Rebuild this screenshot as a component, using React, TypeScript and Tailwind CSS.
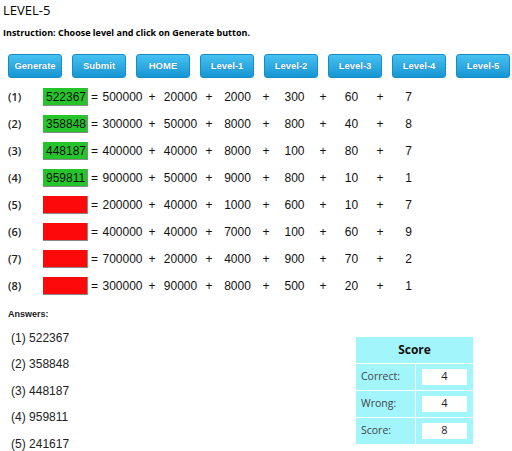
import React from 'react'

const rows = [
  { n: 1, ans: '522367', parts: ['500000', '20000', '2000', '300', '60', '7'] },
  { n: 2, ans: '358848', parts: ['300000', '50000', '8000', '800', '40', '8'] },
  { n: 3, ans: '448187', parts: ['400000', '40000', '8000', '100', '80', '7'] },
  { n: 4, ans: '959811', parts: ['900000', '50000', '9000', '800', '10', '1'] },
  { n: 5, ans: '', parts: ['200000', '40000', '1000', '600', '10', '7'] },
  { n: 6, ans: '', parts: ['400000', '40000', '7000', '100', '60', '9'] },
  { n: 7, ans: '', parts: ['700000', '20000', '4000', '900', '70', '2'] },
  { n: 8, ans: '', parts: ['300000', '90000', '8000', '500', '20', '1'] },
]

const buttons = ['Generate', 'Submit', 'HOME', 'Level-1', 'Level-2', 'Level-3', 'Level-4', 'Level-5']

const answers = ['522367', '358848', '448187', '959811', '241617']

const scores = [
  { label: 'Correct:', value: '4' },
  { label: 'Wrong:', value: '4' },
  { label: 'Score:', value: '8' },
]

export default function App() {
  return (
    <div className="w-[512px] h-[451px] overflow-hidden bg-white text-black">
      <h1 className="pl-[3px] pt-[1px] text-[13px] leading-[18px] text-black font-['Open_Sans',sans-serif]">LEVEL-5</h1>
      <p className="mt-[7.5px] pl-[3px] text-[9px] leading-[12px] font-bold text-black font-['Open_Sans',sans-serif]">
        Instruction: Choose level and click on Generate button.
      </p>

      {/* Buttons */}
      <div className="mt-[15.5px] flex gap-[10px] pl-[8px]">
        {buttons.map((b) => (
          <button
            key={b}
            className="w-[54px] h-[24px] rounded-[3px] border border-[#1a8cc4] bg-gradient-to-b from-[#45c1f2] to-[#1596d3] text-white text-[9.5px] font-bold font-['Liberation_Sans',Arial,sans-serif] [text-shadow:0_0_1px_rgba(0,60,100,0.5)]"
          >
            {b}
          </button>
        ))}
      </div>

      {/* Problems */}
      <div className="mt-[5.5px]">
        {rows.map((r) => (
          <div key={r.n} className="flex items-center h-[27px] pl-[8px] text-[12px] font-['Liberation_Sans',Arial,sans-serif] text-[#111]">
            <div className="w-[35px] text-[11px] font-semibold font-['Open_Sans',sans-serif] text-[#222]">({r.n})</div>
            <div
              className={`w-[45px] h-[18px] leading-[18px] pl-[3px] border-r border-b border-[#8a8a8a] ${
                r.ans ? 'bg-[#26c42b]' : 'bg-[#fc0a0a]'
              }`}
            >
              {r.ans}
            </div>
            <div className="w-[13px] text-center">=</div>
            {r.parts.map((p, i) => (
              <React.Fragment key={i}>
                {i > 0 && <div className="w-[16px] text-center">+</div>}
                <div className={`${i === 0 ? 'w-[43px]' : 'w-[41px]'} text-center`}>{p}</div>
              </React.Fragment>
            ))}
          </div>
        ))}
      </div>

      {/* Answers and score */}
      <div className="flex items-start">
        <div className="w-[356px]">
          <div className="mt-[8.5px] pl-[8px] text-[9px] leading-[12px] font-bold font-['Liberation_Sans',Arial,sans-serif] text-[#222]">
            Answers:
          </div>
          <div className="mt-[4.75px]">
            {answers.map((a, i) => (
              <div key={i} className="h-[26.5px] leading-[26.5px] pl-[11px] text-[12px] font-['Liberation_Sans',Arial,sans-serif] text-[#222]">
                ({i + 1}) {a}
              </div>
            ))}
          </div>
        </div>

        <div className="mt-[37px] self-start w-[117px] grid grid-cols-[59px_57px] content-start gap-[1px] bg-white font-['Open_Sans',sans-serif]">
          <div className="col-span-2 h-[26px] bg-[#a2f5fb] flex items-center justify-center text-[12px] font-bold text-[#111]">
            Score
          </div>
          {scores.map((s) => (
            <React.Fragment key={s.label}>
              <div className="h-[26px] bg-[#a2f5fb] flex items-center pl-[5px] text-[10.5px] text-[#444]">{s.label}</div>
              <div className="h-[26px] bg-[#a2f5fb] flex items-center pl-[6px]">
                <div className="w-[45px] h-[16px] bg-white flex items-center justify-center text-[11px] text-[#222]">
                  {s.value}
                </div>
              </div>
            </React.Fragment>
          ))}
        </div>
      </div>
    </div>
  )
}
